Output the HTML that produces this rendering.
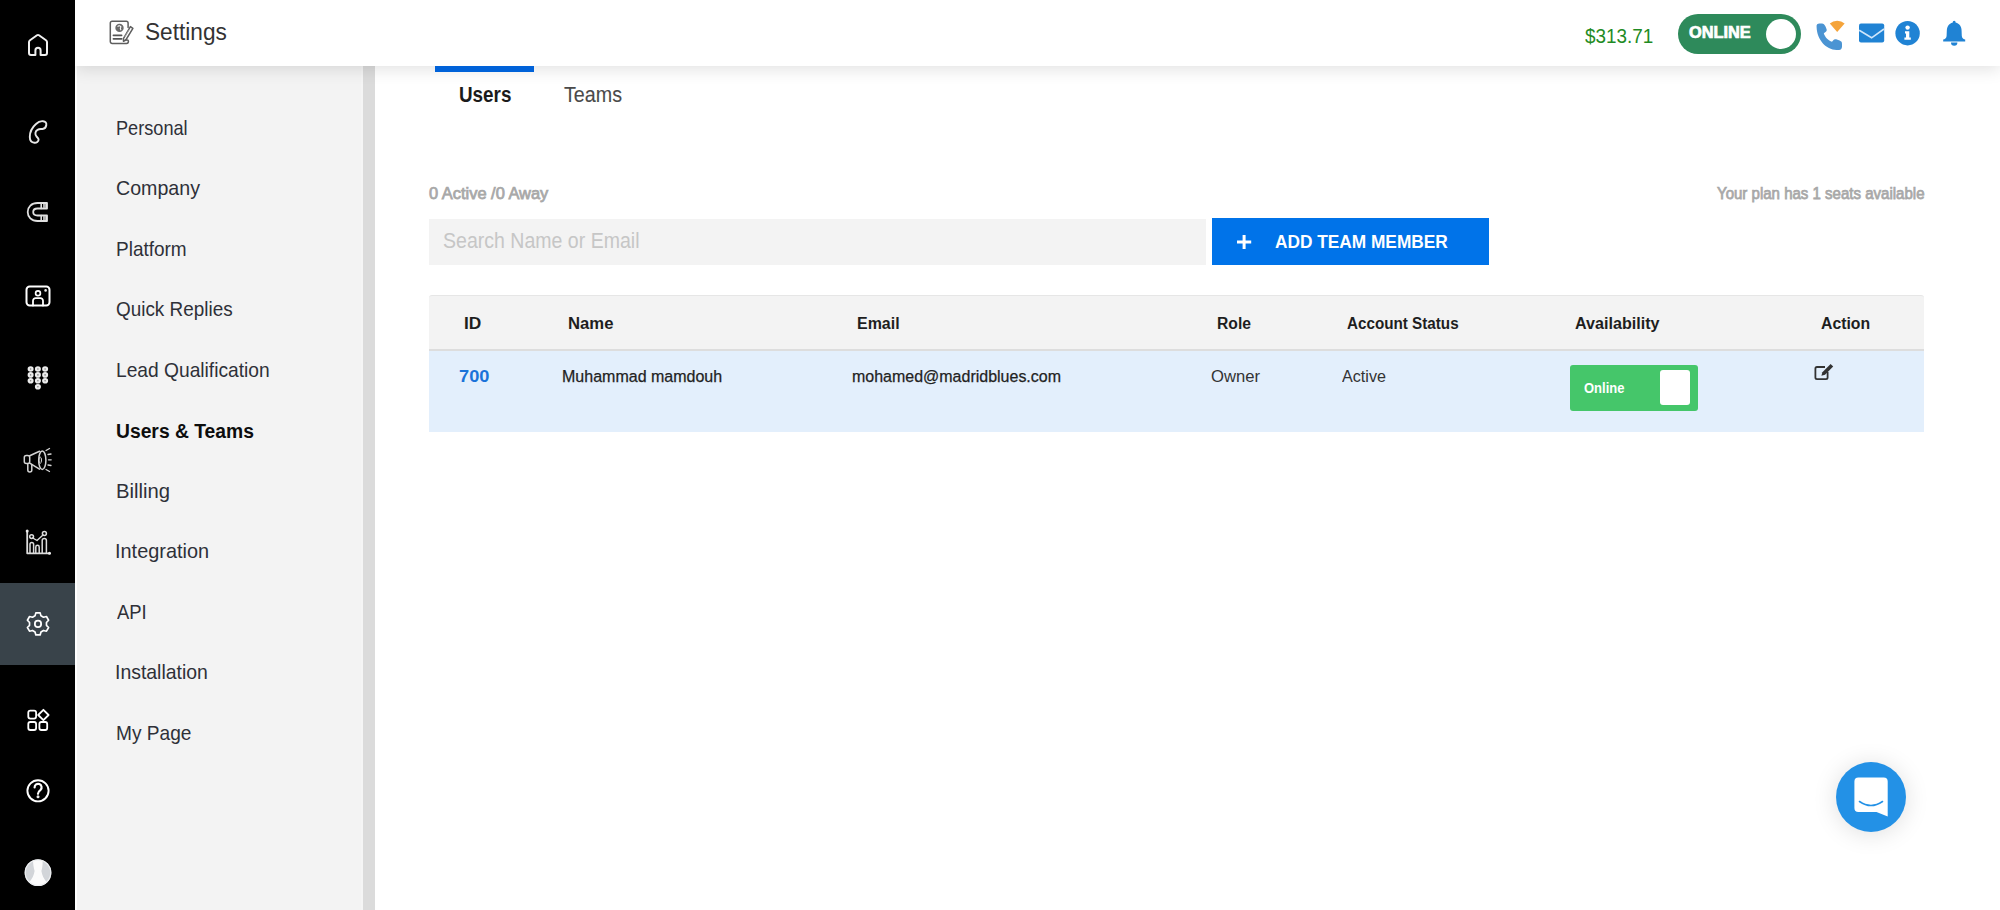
<!DOCTYPE html>
<html><head><meta charset="utf-8"><title>Settings</title>
<style>
html,body{margin:0;padding:0;}
body{width:2000px;height:910px;overflow:hidden;position:relative;background:#fff;font-family:"Liberation Sans",sans-serif;}
.t{position:absolute;white-space:nowrap;transform-origin:0 0;}
.a{position:absolute;}
svg{position:absolute;overflow:visible;}
</style></head><body>
<!-- side menu -->
<div class="a" style="left:77px;top:0;width:284px;height:910px;background:#f3f3f3"></div>
<div class="a" style="left:361px;top:0;width:2px;height:910px;background:#f5f5f5"></div>
<div class="a" style="left:363px;top:0;width:12px;height:910px;background:#dbdbdb"></div>
<!-- header -->
<div class="a" style="left:75px;top:0;width:1925px;height:66px;background:#fff;box-shadow:0 3px 16px rgba(0,0,0,0.12)"></div>
<!-- black sidebar -->
<div class="a" style="left:0;top:0;width:75px;height:910px;background:#000"></div>
<div class="a" style="left:0;top:583px;width:75px;height:82px;background:#39434a"></div>
<!-- tab underline -->
<div class="a" style="left:435px;top:66px;width:99px;height:6px;background:#0062d9"></div>
<!-- search -->
<div class="a" style="left:429px;top:219px;width:777px;height:46px;background:#f3f3f3"></div>
<!-- button -->
<div class="a" style="left:1212px;top:218px;width:277px;height:47px;background:#0073e9"></div>
<!-- table -->
<div class="a" style="left:429px;top:295px;width:1495px;height:55px;background:#f3f3f3;border-top:1px solid #e6e6e6;box-sizing:border-box;border-radius:3px 3px 0 0"></div>
<div class="a" style="left:429px;top:349px;width:1495px;height:2px;background:#dddddd"></div>
<div class="a" style="left:429px;top:351px;width:1495px;height:81px;background:#e3effc"></div>
<!-- row toggle -->
<div class="a" style="left:1570px;top:365px;width:128px;height:46px;background:#45c66a;border-radius:3px"></div>
<div class="a" style="left:1660px;top:370px;width:30px;height:35px;background:#fff;border-radius:3px"></div>
<!-- header online toggle -->
<div class="a" style="left:1678px;top:13.5px;width:123px;height:40px;background:#2e8a5b;border-radius:20px"></div>
<div class="a" style="left:1765.5px;top:18.5px;width:30px;height:30px;background:#fff;border-radius:50%"></div>
<!-- chat button -->
<div class="a" style="left:1836px;top:762px;width:70px;height:70px;background:#2391e6;border-radius:50%;box-shadow:0 2px 24px rgba(0,0,0,0.13)"></div>

<svg width="2000" height="910" style="left:0;top:0" viewBox="0 0 2000 910">
 <g fill="none" stroke="#fff" stroke-width="2" stroke-linejoin="round" stroke-linecap="round">
  <!-- home -->
  <path stroke="#f0f0f0" d="M31 55 Q29 55 29 53 L29 42 Q29 41 30 40.3 L37 35.3 Q38 34.6 39 35.3 L46 40.3 Q47 41 47 42 L47 53 Q47 55 45 55 L40.6 55 L40.6 50.4 A2.6 2.6 0 0 0 35.4 50.4 L35.4 55 Z"/>
  <!-- phone outline -->
  <path d="M36 124 C38 122 41 121 43 121.2 C45.5 121.5 46.6 123 46.3 125 C46 127 44.5 128.8 42.5 129 C40.5 129.2 39.5 128.8 37.5 129.8 C35 131 34.8 134.5 36.5 136.5 C37.5 137.6 38.5 138.2 38.6 139.5 C38.6 141.5 36.5 143 34.5 142.8 C31.5 142.5 29.8 140 29.8 137 C29.8 132 32 127.5 36 124 Z" stroke="#e8e8e8" stroke-width="1.9"/>
  <!-- magnet -->
  <path stroke="#e0e0e0" d="M47 203 H37.5 C31.5 203 27.7 207 27.7 212 C27.7 217 31.5 221 37.5 221 H47 V215.5 H37.5 C35 215.5 33.2 214 33.2 212 C33.2 210 35 208.5 37.5 208.5 H47 Z" stroke-width="1.8"/>
  <path d="M41.2 203 V208.5 M41.2 215.5 V221" stroke-width="1.6" stroke="#e0e0e0"/>
  <!-- contact card -->
  <rect x="26.5" y="286.5" width="23" height="19" rx="3.2"/>
  <circle cx="38" cy="293.2" r="2.4" stroke-width="1.7"/>
  <path d="M33 305.5 V300.8 A2.6 2.6 0 0 1 35.6 298.2 H40.4 A2.6 2.6 0 0 1 43 300.8 V305.5" stroke-width="1.8"/>
  <!-- megaphone -->
  <g stroke="#d4d4d4">
  <path d="M29.7 455.8 L39.5 451.3 M29.7 463.2 L39.5 469.2" stroke-width="1.5"/>
  <rect x="24.3" y="455.5" width="5.4" height="8" rx="2" stroke-width="1.5"/>
  <ellipse cx="42.3" cy="460.2" rx="3.6" ry="9.3" stroke-width="1.5"/>
  <ellipse cx="40.2" cy="460.2" rx="1.3" ry="3.2" stroke-width="1"/>
  <path d="M27.8 463.8 V470 A2 2 0 0 0 31.8 470 V464.5" stroke-width="1.5"/>
  <path d="M46 450.5 L49.5 448.5 M48 454.5 L51 454 M48.5 459.8 L51.2 459.8 M48 465 L51 465.5 M46 469.5 L49.5 471.5" stroke-width="1.3"/>
  </g>
  <!-- chart -->
  <g stroke="#dcdcdc"><path d="M27.2 531 V553.3 H49.5" stroke-width="1.8"/>
  <path d="M30 553 V544.2 A1.8 1.8 0 0 1 33.6 544.2 V553 M35.8 553 V547 A1.7 1.7 0 0 1 39.2 547 V553 M42.2 553 V540.6 A2.1 2.1 0 0 1 46.4 540.6 V553" stroke-width="1.5"/>
  <path d="M32.8 538 L37 540.5 L43 535" stroke-width="1.4"/>
  <circle cx="31.6" cy="536.6" r="1.9" stroke-width="1.5"/>
  <circle cx="44.4" cy="533.6" r="2" stroke-width="1.5"/>
  </g>
  <!-- gear -->
  <g transform="translate(38 623.9) scale(0.93) translate(-38 -624.75)"><path d="M35.7 612.9 L40.3 612.9 L41.2 616.1 L43.9 617.6 L47.1 616.8 L49.4 620.8 L47.1 623.2 L47.1 626.3 L49.4 628.6 L47.1 632.6 L43.9 631.8 L41.2 633.4 L40.3 636.6 L35.7 636.6 L34.8 633.4 L32.1 631.8 L28.9 632.6 L26.6 628.6 L28.9 626.3 L28.9 623.2 L26.6 620.8 L28.9 616.8 L32.1 617.6 L34.8 616.1 Z" stroke-width="1.8"/>
  <circle cx="38" cy="624.75" r="3.4" stroke-width="1.9"/></g>
  <!-- apps -->
  <rect x="28.3" y="710.6" width="7.8" height="8" rx="2" stroke-width="1.8"/>
  <rect x="28.3" y="722" width="7.8" height="8" rx="2" stroke-width="1.8"/>
  <rect x="39.4" y="722" width="7.8" height="8" rx="2" stroke-width="1.8"/>
  <path d="M43.4 709.8 L48.6 715 L43.4 720.2 L38.2 715 Z" stroke-width="1.8"/>
  <!-- help -->
  <circle cx="38" cy="790.8" r="10.6" stroke-width="1.9"/>
  <path d="M34.6 787.4 A3.5 3.5 0 1 1 40.6 789.8 C39 791 38 791.8 38 793.8" stroke-width="2.2"/>
 </g>
 <g fill="#ececec">
  <circle cx="45.6" cy="290.4" r="1.3"/>
  <rect x="43" y="203.8" width="4" height="4" opacity="0.75"/>
  <rect x="43" y="216.2" width="4" height="4" opacity="0.75"/>
  <circle cx="27.2" cy="531" r="1.5"/>
  <circle cx="49.5" cy="553.3" r="1.5"/>
  <circle cx="38" cy="796.8" r="1.5"/>
  <!-- dialpad -->
  <g>
   <ellipse cx="30.6" cy="369" rx="3" ry="2.8"/><ellipse cx="37.9" cy="369" rx="3" ry="2.8"/><ellipse cx="45.1" cy="369" rx="3" ry="2.8"/>
   <ellipse cx="30.6" cy="374.9" rx="3" ry="2.8"/><ellipse cx="37.9" cy="374.9" rx="3" ry="2.8"/><ellipse cx="45.1" cy="374.9" rx="3" ry="2.8"/>
   <ellipse cx="30.6" cy="380.8" rx="3" ry="2.8"/><ellipse cx="37.9" cy="380.8" rx="3" ry="2.8"/><ellipse cx="45.1" cy="380.8" rx="3" ry="2.8"/>
   <ellipse cx="37.9" cy="386.7" rx="3" ry="2.8"/>
  </g>
 </g>
 <g fill="#000" opacity="0.45">
  <circle cx="30.6" cy="369" r="0.8"/><circle cx="37.9" cy="369" r="0.8"/><circle cx="45.1" cy="369" r="0.8"/>
  <circle cx="30.6" cy="374.9" r="0.8"/><circle cx="37.9" cy="374.9" r="0.8"/><circle cx="45.1" cy="374.9" r="0.8"/>
  <circle cx="30.6" cy="380.8" r="0.8"/><circle cx="37.9" cy="380.8" r="0.8"/><circle cx="45.1" cy="380.8" r="0.8"/>
  <circle cx="37.9" cy="386.7" r="0.8"/>
 </g>
 <!-- avatar -->
 <defs><clipPath id="avc"><circle cx="38" cy="872.7" r="13"/></clipPath></defs>
 <circle cx="38" cy="872.7" r="13.3" fill="#d2d5d9"/>
 <path clip-path="url(#avc)" d="M33 861 C33 858.6 42.6 858.6 42.6 861 C42.8 864 42.4 868 41.4 871 C42 875 44 879 46.5 882 L47 890 L29 890 L29.5 882 C32 879 34 875 34.6 871 C33.6 868 33.2 864 33 861 Z" fill="#fbfbfb"/>
 <circle cx="38" cy="872.7" r="12.8" fill="none" stroke="#eceef0" stroke-width="1.2"/>

 <!-- settings header icon -->
 <g fill="none" stroke="#5e5e5e" stroke-width="1.5" stroke-linejoin="round" stroke-linecap="round">
  <path d="M128.1 27.6 V23 A1.8 1.8 0 0 0 126.3 21.2 H112.1 A1.8 1.8 0 0 0 110.3 23 V41.6 A1.8 1.8 0 0 0 112.1 43.4 H126.6 A1.8 1.8 0 0 0 128.4 41.6 V41 Q128.4 40 127.2 40 H125.2"/>
  <path d="M113.4 35.3 H121.6 M113.4 38.8 H121.6" stroke-width="1.7" stroke="#555"/>
  <path d="M130.4 26.6 L132.9 28.4 L125.8 40 L123.5 41.3 L123.4 38.7 Z" stroke-width="1.5"/>
  <path d="M129.2 29.8 L125 36.6" stroke-width="0.8" stroke="#aaa"/>
 </g>
 <circle cx="119.5" cy="27.9" r="4.2" fill="#6b6b6b"/>
 <path d="M117.6 26.6 Q119.2 24.9 120.9 26.8 Q119.6 28.4 121 30.2" fill="none" stroke="#fff" stroke-width="1.1"/>

 <!-- header phone -->
 <path fill="#4b94d3" d="M1816.6 27 C1816.2 24.5 1817.5 23.5 1819.5 23.5 L1822 23.6 C1823.5 23.8 1824.5 24.5 1825.5 26.5 L1826.6 29.2 C1827 30.5 1826.5 31.3 1825.5 32 L1823.8 33.2 C1824.5 36.5 1828.5 40.8 1832 41.8 L1833.3 40.2 C1834 39.2 1835 38.9 1836.2 39.3 L1839.6 40.6 C1841.5 41.4 1842 42.3 1842 44 L1842 46.5 C1842 48.5 1841 49.8 1839 50 L1836.5 50 C1826 49.5 1817 40 1816.6 27 Z"/>
 <path fill="#f5a43a" d="M1837.2 32 L1829.8 23.6 A11 11 0 0 1 1844.6 23.6 Z"/>
 <!-- mail -->
 <rect x="1859" y="23.5" width="25.2" height="19" rx="2" fill="#2083d4"/>
 <path d="M1859.2 30.3 L1871.6 37.8 L1884 29" fill="none" stroke="#cfe6fb" stroke-width="1.6"/>
 <!-- info -->
 <circle cx="1907.6" cy="33.2" r="12.2" fill="#2083d4"/>
 <circle cx="1907.6" cy="27.6" r="2.2" fill="#fff"/>
 <path d="M1905 31.3 H1909.3 V37.4 H1910.8 V39.8 H1904.4 V37.4 H1906 V33.6 H1905 Z" fill="#fff"/>
 <!-- bell -->
 <path fill="#2083d4" d="M1954.2 20.8 C1955.2 20.8 1955.6 21.6 1955.6 22.6 C1959.6 23.6 1961.6 27 1961.6 31 L1961.8 36 C1962 38.2 1963.6 39.2 1965.2 39.6 V41.4 H1943.2 V39.6 C1944.8 39.2 1946.4 38.2 1946.6 36 L1946.8 31 C1946.8 27 1948.8 23.6 1952.8 22.6 C1952.8 21.6 1953.2 20.8 1954.2 20.8 Z"/>
 <path fill="#2083d4" d="M1951 42.6 H1957.4 A3.2 3.2 0 0 1 1951 42.6 Z"/>

 <!-- edit icon -->
 <g fill="none" stroke="#333" stroke-width="1.8" stroke-linejoin="round">
  <path d="M1825 367 H1817 A1.6 1.6 0 0 0 1815.4 368.6 V377.6 A1.6 1.6 0 0 0 1817 379.2 H1826 A1.6 1.6 0 0 0 1827.6 377.6 V372"/>
 </g>
 <path fill="#333" d="M1830.6 364 L1833.2 366.6 L1825 374.8 L1821.4 375.8 L1822.4 372.2 Z"/>

 <!-- chat bubble -->
 <path fill="#fff" d="M1858.4 777.5 H1883.7 A4 4 0 0 1 1887.7 781.5 V816.4 L1876.5 812 H1858.4 A4 4 0 0 1 1854.4 808 V781.5 A4 4 0 0 1 1858.4 777.5 Z"/>
 <path d="M1859.5 801.5 Q1871 809.5 1882.5 801.5" fill="none" stroke="#2391e6" stroke-width="1.6" stroke-linecap="round"/>
 <!-- plus on button -->
 <path d="M1244.1 235 V249 M1237 242 H1251.2" stroke="#fff" stroke-width="3"/>
</svg>

<div class='t' style='left:144.87px;top:20.10px;font-size:23.77px;line-height:23.77px;font-weight:400;color:#333;transform:scaleX(0.9535);'>Settings</div><div class='t' style='left:1585.41px;top:25.75px;font-size:20.29px;line-height:20.29px;font-weight:400;color:#1f8b24;transform:scaleX(0.9302);'>$313.71</div><div class='t' style='left:1689.35px;top:25.30px;font-size:15.65px;line-height:15.65px;font-weight:700;color:#fff;transform:scaleX(1.0447);-webkit-text-stroke:0.7px #fff;'>ONLINE</div><div class='t' style='left:115.75px;top:117.61px;font-size:20.87px;line-height:20.87px;font-weight:400;color:#2e3038;transform:scaleX(0.8701);'>Personal</div><div class='t' style='left:116.22px;top:178.11px;font-size:20.87px;line-height:20.87px;font-weight:400;color:#2e3038;transform:scaleX(0.9402);'>Company</div><div class='t' style='left:115.68px;top:238.61px;font-size:20.87px;line-height:20.87px;font-weight:400;color:#2e3038;transform:scaleX(0.9101);'>Platform</div><div class='t' style='left:116.25px;top:299.11px;font-size:20.87px;line-height:20.87px;font-weight:400;color:#2e3038;transform:scaleX(0.9063);'>Quick Replies</div><div class='t' style='left:115.66px;top:359.61px;font-size:20.87px;line-height:20.87px;font-weight:400;color:#2e3038;transform:scaleX(0.9205);'>Lead Qualification</div><div class='t' style='left:116.04px;top:420.60px;font-size:20.29px;line-height:20.29px;font-weight:700;color:#0d0d0d;transform:scaleX(0.9508);'>Users &amp; Teams</div><div class='t' style='left:115.58px;top:480.61px;font-size:20.87px;line-height:20.87px;font-weight:400;color:#2e3038;transform:scaleX(0.9697);'>Billing</div><div class='t' style='left:115.41px;top:541.11px;font-size:20.87px;line-height:20.87px;font-weight:400;color:#2e3038;transform:scaleX(0.9541);'>Integration</div><div class='t' style='left:117.20px;top:601.61px;font-size:20.87px;line-height:20.87px;font-weight:400;color:#2e3038;transform:scaleX(0.8827);'>API</div><div class='t' style='left:115.45px;top:662.11px;font-size:20.87px;line-height:20.87px;font-weight:400;color:#2e3038;transform:scaleX(0.9314);'>Installation</div><div class='t' style='left:115.67px;top:722.61px;font-size:20.87px;line-height:20.87px;font-weight:400;color:#2e3038;transform:scaleX(0.9157);'>My Page</div><div class='t' style='left:458.67px;top:84.38px;font-size:22.61px;line-height:22.61px;font-weight:700;color:#1b1b1b;transform:scaleX(0.8335);'>Users</div><div class='t' style='left:563.81px;top:84.38px;font-size:22.61px;line-height:22.61px;font-weight:400;color:#4a4a4a;transform:scaleX(0.8724);-webkit-text-stroke:0.1px #4a4a4a;'>Teams</div><div class='t' style='left:429.14px;top:185.95px;font-size:15.94px;line-height:15.94px;font-weight:400;color:#a8a8a8;transform:scaleX(1.0304);-webkit-text-stroke:0.75px #a8a8a8;'>0 Active /0 Away</div><div class='t' style='left:1716.95px;top:186.25px;font-size:15.94px;line-height:15.94px;font-weight:400;color:#a8a8a8;transform:scaleX(0.9430);-webkit-text-stroke:0.75px #a8a8a8;'>Your plan has 1 seats available</div><div class='t' style='left:442.52px;top:230.23px;font-size:22.32px;line-height:22.32px;font-weight:400;color:#c6c6c6;transform:scaleX(0.8754);'>Search Name or Email</div><div class='t' style='left:1274.88px;top:232.79px;font-size:18.84px;line-height:18.84px;font-weight:700;color:#fff;transform:scaleX(0.9175);'>ADD TEAM MEMBER</div><div class='t' style='left:463.89px;top:315.57px;font-size:15.80px;line-height:15.80px;font-weight:700;color:#1e1e1e;transform:scaleX(1.0954);'>ID</div><div class='t' style='left:568.33px;top:315.57px;font-size:15.80px;line-height:15.80px;font-weight:700;color:#1e1e1e;transform:scaleX(1.0559);'>Name</div><div class='t' style='left:857.48px;top:315.57px;font-size:15.80px;line-height:15.80px;font-weight:700;color:#1e1e1e;transform:scaleX(1.0108);'>Email</div><div class='t' style='left:1216.60px;top:315.57px;font-size:15.80px;line-height:15.80px;font-weight:700;color:#1e1e1e;transform:scaleX(0.9926);'>Role</div><div class='t' style='left:1347.24px;top:315.57px;font-size:15.80px;line-height:15.80px;font-weight:700;color:#1e1e1e;transform:scaleX(0.9635);'>Account Status</div><div class='t' style='left:1575.22px;top:315.57px;font-size:15.80px;line-height:15.80px;font-weight:700;color:#1e1e1e;transform:scaleX(1.0206);'>Availability</div><div class='t' style='left:1820.73px;top:315.57px;font-size:15.80px;line-height:15.80px;font-weight:700;color:#1e1e1e;transform:scaleX(0.9998);'>Action</div><div class='t' style='left:459.27px;top:368.56px;font-size:16.52px;line-height:16.52px;font-weight:700;color:#1a73d9;transform:scaleX(1.1039);'>700</div><div class='t' style='left:562.22px;top:368.00px;font-size:16.23px;line-height:16.23px;font-weight:400;color:#222;transform:scaleX(0.9872);-webkit-text-stroke:0.25px #222;'>Muhammad mamdouh</div><div class='t' style='left:851.88px;top:368.00px;font-size:16.23px;line-height:16.23px;font-weight:400;color:#222;transform:scaleX(0.9855);-webkit-text-stroke:0.25px #222;'>mohamed@madridblues.com</div><div class='t' style='left:1210.87px;top:368.00px;font-size:16.23px;line-height:16.23px;font-weight:400;color:#333;transform:scaleX(1.0268);'>Owner</div><div class='t' style='left:1341.70px;top:368.00px;font-size:16.23px;line-height:16.23px;font-weight:400;color:#333;transform:scaleX(0.9954);'>Active</div><div class='t' style='left:1584.28px;top:380.32px;font-size:15.51px;line-height:15.51px;font-weight:700;color:#fff;transform:scaleX(0.8379);'>Online</div>
</body></html>
